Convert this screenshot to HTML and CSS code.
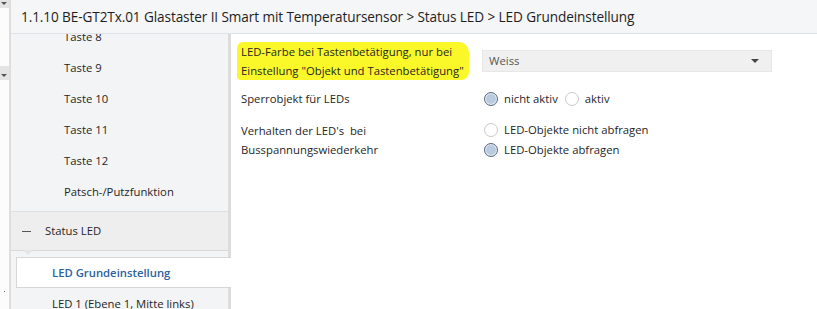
FILE: index.html
```html
<!DOCTYPE html>
<html lang="de">
<head>
  <meta charset="UTF-8" />
  <title>LED Grundeinstellung</title>
  <link rel="stylesheet" href="styles.css">
</head>
<body>
  <div class="rail">
    <div class="rail-bar top"><span class="rail-caret"></span></div>
    <div class="rail-bar mid"><span class="rail-caret"></span></div>
    <div class="rail-dot"></div>
  </div>

  <div class="main">
    <div class="title">1.1.10 BE-GT2Tx.01 Glastaster II Smart mit Temperatursensor &gt; Status LED &gt; LED Grundeinstellung</div>

    <div class="panes">
      <div class="nav">
        <div class="nav-list">
          <div class="nav-item">Taste 8</div>
          <div class="nav-item">Taste 9</div>
          <div class="nav-item">Taste 10</div>
          <div class="nav-item">Taste 11</div>
          <div class="nav-item">Taste 12</div>
          <div class="nav-item">Patsch-/Putzfunktion</div>
        </div>
        <div class="nav-group"><span class="minus"></span>Status LED</div>
        <div class="nav-item selected">LED Grundeinstellung</div>
        <div class="nav-item sub">LED 1 (Ebene 1, Mitte links)</div>
      </div>

      <div class="content">
        <div class="row first">
          <div class="label"><span class="marker">LED-Farbe bei Tastenbetätigung, nur bei<br>Einstellung "Objekt und Tastenbetätigung"</span></div>
          <div class="control">
            <div class="select">Weiss<span class="caret"></span></div>
          </div>
        </div>

        <div class="row second">
          <div class="label">Sperrobjekt für LEDs</div>
          <div class="control inline">
            <label class="radio"><span class="dot checked"></span>nicht aktiv</label>
            <label class="radio"><span class="dot"></span>aktiv</label>
          </div>
        </div>

        <div class="row third">
          <div class="label">Verhalten der LED's&nbsp; bei<br>Busspannungswiederkehr</div>
          <div class="control stack">
            <label class="radio"><span class="dot"></span>LED-Objekte nicht abfragen</label>
            <label class="radio"><span class="dot checked"></span>LED-Objekte abfragen</label>
          </div>
        </div>
      </div>
    </div>
  </div>
</body>
</html>
```

FILE: styles.css
```css
html, body { height: 100%; }
body { margin: 0; display: flex; font-family: 'Open Sans', 'Noto Sans', sans-serif; font-size: 11.3px; color: #262626; background: #fff; overflow: hidden; }

.rail { width: 9px; border-right: 2px solid #dedede; background: #fcfcfc; }
.rail-bar { background: #e4e4e4; position: relative; }
.rail-bar.top { height: 8px; }
.rail-bar.mid { height: 14px; margin-top: 58px; }
.rail-caret { position: absolute; left: 1px; bottom: 3px; border: 3px solid transparent; border-bottom: 0; border-top-color: #555; }
.rail-dot { width: 1px; height: 1px; margin: 211px 0 0 4px; background: #666; }

.main { flex: 1; display: flex; flex-direction: column; min-width: 0; }
.title { height: 33px; line-height: 33px; padding-left: 10px; font-size: 13.6px; letter-spacing: -0.1px; color: #1e1e1e; background: #f5f6f7; border-bottom: 1px solid #dfe2e6; white-space: nowrap; position: relative; z-index: 1; }

.panes { flex: 1; display: flex; min-height: 0; }

.nav { width: 217px; background: #f3f4f5; border-right: 3px solid #dcdcdc; }
.nav-list { margin-top: -13px; padding-bottom: 4px; border-bottom: 1px solid #dedfe0; }
.nav-item { height: 31px; line-height: 31px; padding-left: 53px; white-space: nowrap; }
.nav-group { height: 38px; line-height: 38px; padding-left: 34px; background: #eeeeee; border-bottom: 1px solid #d9d9d9; position: relative; }
.nav-group::after { content: ""; position: absolute; left: 12px; bottom: -5px; border: 5px solid transparent; border-bottom: 0; border-top-color: #e4e4e4; }
.minus { display: inline-block; width: 9px; height: 1px; background: #555; vertical-align: middle; margin-left: -23px; margin-right: 14px; }
.nav-item.selected { margin: 6px -3px 0 5px; height: 29px; line-height: 29px; padding-left: 35px; background: #fff; border: 1px solid #d6d6d6; border-right: 0; color: #2a62a0; font-weight: 600; position: relative; }
.nav-item.sub { padding-left: 41px; }

.content { flex: 1; padding: 8px 0 0 10px; }
.row { display: flex; }
.label { width: 241px; line-height: 19px; flex-shrink: 0; white-space: nowrap; }
.marker { display: inline-block; margin-left: -4px; padding: 0 5px 0 4px; background: #fbf82a; border-radius: 6px 10px 8px 4px; }
.row.second { margin-top: 9px; }
.row.third { margin-top: 13px; }

.select { width: 282px; height: 20px; line-height: 20px; margin-top: 8px; padding-left: 6px; background: #f0f0f0; border: 1px solid #e7e7e7; color: #555; position: relative; }
.caret { position: absolute; right: 12px; top: 8px; border: 4px solid transparent; border-bottom: 0; border-top-color: #444; }

.control.inline { display: flex; gap: 5px; line-height: 19px; }
.control.stack { line-height: 20px; margin-top: -1px; }
.radio { display: flex; align-items: center; white-space: nowrap; }
.dot { width: 14px; height: 14px; box-sizing: border-box; border: 1px solid #c9c9c9; border-radius: 50%; background: #fff; margin: 0 6px 0 2px; }
.dot.checked { border-color: #5d6b7a; background: #b9cbe0; box-shadow: inset 0 0 0 1px #e8eef5; }
```
